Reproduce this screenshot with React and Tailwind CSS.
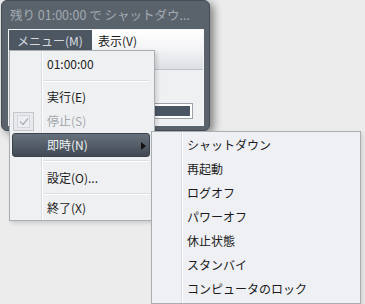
import React from "react";

const MAIN_ITEMS = [
  { type: "item", label: "01:00:00" },
  { type: "sep", cls: "h-[9px] pt-[4px]" },
  { type: "item", label: "実行(E)" },
  { type: "item", label: "停止(S)", disabled: true, checked: true },
  { type: "item", label: "即時(N)", active: true, sub: true },
  { type: "sep", cls: "h-[9px] pt-[3px]" },
  { type: "item", label: "設定(O)..." },
  { type: "sep", cls: "h-[6px] pt-[3px]" },
  { type: "item", label: "終了(X)" },
];

const SUB_ITEMS = [
  "シャットダウン",
  "再起動",
  "ログオフ",
  "パワーオフ",
  "休止状態",
  "スタンバイ",
  "コンピュータのロック",
];

function CheckBox() {
  return (
    <div className="w-[21px] h-[19px] border border-[#c3c7cc] bg-[#e7e9ec] flex items-center justify-center">
      <div className="w-[13px] h-[13px] border border-[#d3d6da] bg-[#eceef0] flex items-center justify-center">
        <svg width="10" height="9" viewBox="0 0 10 9">
          <path d="M1 4.5 L4 7.5 L9 1.5" fill="none" stroke="#aeb3b8" strokeWidth="1.5" />
        </svg>
      </div>
    </div>
  );
}

function MainMenu() {
  return (
    <div className="absolute left-[9px] top-[50px] w-[146px] h-[171px] bg-[#eff0f2] border border-[#a9aeb3] shadow-[2px_2px_4px_rgba(0,0,0,0.15)]">
      {/* gutter line */}
      <div className="absolute left-[31px] top-0 bottom-0 w-[1px] bg-[#d9dce0]" />
      <div className="absolute left-[32px] top-0 bottom-0 w-[1px] bg-white" />
      <div className="relative flex flex-col pt-[1px]">
        {MAIN_ITEMS.map((it, i) =>
          it.type === "sep" ? (
            <div key={i} className={it.cls}>
              <div className="ml-[33px] mr-[4px] h-[1px] bg-[#dcdfe2]" />
              <div className="ml-[33px] mr-[4px] h-[1px] bg-white" />
            </div>
          ) : (
            <div key={i} className="relative h-[24px] flex items-center">
              {it.active && (
                <div className="absolute left-[2px] right-[4px] top-0 bottom-0 rounded-[3px] bg-gradient-to-b from-[#67717c] to-[#414a54] border border-[#3a424b]" />
              )}
              <div className="relative w-[37px] flex pl-[3px]">
                {it.checked && <CheckBox />}
              </div>
              <span
                className={
                  "relative text-[12px] " +
                  (it.disabled ? "text-[#a4a8ad]" : it.active ? "text-[#eef1f4]" : "text-[#1b1b1b]")
                }
              >
                {it.label}
              </span>
              {it.sub && (
                <svg className="absolute left-[131px] top-[9px]" width="5" height="8" viewBox="0 0 5 8">
                  <path d="M0 0 L5 4 L0 8 Z" fill="#111" />
                </svg>
              )}
            </div>
          )
        )}
      </div>
    </div>
  );
}

function SubMenu() {
  return (
    <div className="absolute left-[151px] top-[131px] w-[210px] h-[173px] bg-[#eef0f3] border border-[#a9aeb3] shadow-[2px_2px_4px_rgba(0,0,0,0.12)]">
      <div className="absolute left-[29px] top-0 bottom-0 w-[1px] bg-[#d9dce0]" />
      <div className="absolute left-[30px] top-0 bottom-0 w-[1px] bg-white" />
      <div className="relative flex flex-col pt-[1px]">
        {SUB_ITEMS.map((label) => (
          <div key={label} className="h-[24px] flex items-center pl-[35px] text-[12px] text-[#1b1b1b]">
            {label}
          </div>
        ))}
      </div>
    </div>
  );
}

export default function App() {
  return (
    <div
      className="relative w-[365px] h-[304px] overflow-hidden bg-[#ececec]"
      style={{ fontFamily: '"Noto Sans CJK JP", "Noto Sans", sans-serif' }}
    >
      {/* window */}
      <div className="absolute left-[1px] top-0 w-[209px] h-[131px] flex flex-col bg-[#5a636c] border border-[#444c55] rounded-[6px] shadow-[4px_3px_8px_rgba(0,0,0,0.45)] pl-[6px] pr-[5px] pb-[4px]">
        <div className="h-[28px] flex items-center pl-[2px] text-[12.5px] text-[#a2aab2] whitespace-nowrap overflow-hidden">
          残り 01:00:00 で シャットダウ...
        </div>
        <div className="flex-1 flex flex-col border border-[#f4f5f6] bg-[#eef0f2]">
          <div className="h-[21px] flex items-stretch bg-gradient-to-b from-white to-[#f2f3f5]">
            <div className="w-[83px] flex items-center pl-[8px] bg-[#4d5761] text-[12px] text-[#d7dce1]">
              メニュー(M)
            </div>
            <div className="flex items-center pl-[6px] text-[12px] text-[#1b1b1b]">表示(V)</div>
          </div>
          <div className="h-[19px] bg-gradient-to-b from-[#f1f2f4] to-[#dcdfe3] border-b border-[#bfc4c9]" />
          <div className="flex-1 pt-[33px] pl-[8px] pr-[10px]">
            <div className="h-[16px] border border-[#9aa1a8] bg-white p-[2px]">
              <div className="h-full bg-[#4b5664]" />
            </div>
          </div>
        </div>
      </div>

      <MainMenu />
      <SubMenu />
    </div>
  );
}
